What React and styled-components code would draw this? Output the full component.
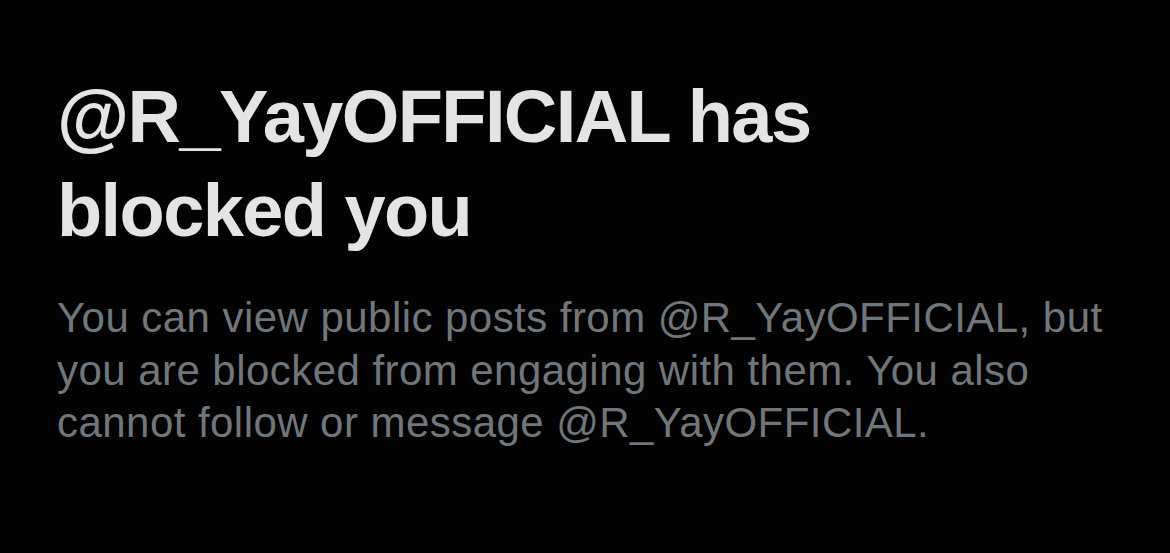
import styled, { createGlobalStyle } from "styled-components";

const Global = createGlobalStyle`
  html, body {
    margin: 0;
    background: #030303;
  }
`;

const Screen = styled.div`
  width: 1170px;
  height: 553px;
  box-sizing: border-box;
  padding: 70px 40px 0 57px;
  background: #030303;
  font-family: "Liberation Sans", Arial, sans-serif;
`;

const Heading = styled.h1`
  margin: 0;
  max-width: 800px;
  color: #e4e4e4;
  font-size: 74px;
  font-weight: 700;
  line-height: 94px;
  letter-spacing: -1.6px;
`;

const Body = styled.p`
  margin: 34px 0 0;
  color: #71767b;
  font-size: 42px;
  line-height: 52.5px;
  letter-spacing: 0.45px;
  max-width: 1080px;
`;

export default function App() {
  return (
    <>
      <Global />
      <Screen>
        <Heading>@R_YayOFFICIAL has blocked you</Heading>
        <Body>
          You can view public posts from @R_YayOFFICIAL, but you are blocked
          from engaging with them. You also cannot follow or message
          @R_YayOFFICIAL.
        </Body>
      </Screen>
    </>
  );
}
